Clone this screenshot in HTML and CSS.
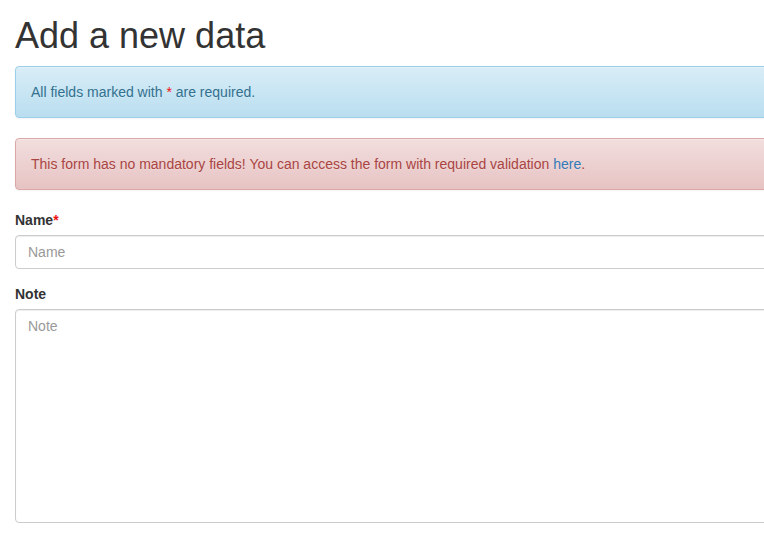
FILE: index.html
```
<!DOCTYPE html>
<html lang="en">
<head>
<meta charset="utf-8">
<title>Add a new data</title>
<link rel="stylesheet" href="styles.css">
</head>
<body>
<div class="container">
  <h1 class="title">Add a new data</h1>
  <div class="alert alert-info">All fields marked with <span class="req">*</span> are required.</div>
  <div class="alert alert-danger">This form has no mandatory fields! You can access the form with required validation <a href="#" class="link">here</a>.</div>
  <form class="form">
    <div class="form-group">
      <label class="label" for="name">Name<span class="req">*</span></label>
      <input class="form-control" id="name" type="text" placeholder="Name">
    </div>
    <div class="form-group">
      <label class="label" for="note">Note</label>
      <textarea class="form-control textarea" id="note" rows="10" placeholder="Note"></textarea>
    </div>
  </form>
</div>
</body>
</html>
```
FILE: styles.css
```
html {
  overflow-x: hidden;
}
body {
  margin: 0;
  font-family: "Liberation Sans", Arial, Helvetica, sans-serif;
  font-size: 14px;
  line-height: 1.42857143;
  color: #333;
  background: #fff;
}
.container {
  width: 970px;
  padding: 0 15px;
  box-sizing: border-box;
}
.title {
  font-family: "Liberation Sans", Arial, sans-serif;
  font-size: 36px;
  font-weight: 500;
  line-height: 1.1;
  margin: 16px 0 10px;
  color: #333;
}
.alert {
  padding: 15px;
  margin-bottom: 20px;
  border: 1px solid transparent;
  border-radius: 4px;
  text-shadow: 0 1px 0 rgba(255,255,255,.2);
  box-shadow: inset 0 1px 0 rgba(255,255,255,.25), 0 1px 2px rgba(0,0,0,.05);
}
.alert-info {
  color: #31708f;
  background-image: linear-gradient(to bottom, #d9edf7 0, #b9def0 100%);
  border-color: #9acfea;
}
.alert-danger {
  color: #a94442;
  background-image: linear-gradient(to bottom, #f2dede 0, #e7c3c3 100%);
  border-color: #dca7a7;
}
.req {
  color: #ee1111;
}
.link {
  color: #337ab7;
  text-decoration: none;
}
.form {
  margin: 0;
}
.form-group {
  margin-bottom: 15px;
}
.label {
  display: inline-block;
  max-width: 100%;
  margin-bottom: 5px;
  font-weight: 700;
}
.form-control {
  display: block;
  width: 100%;
  height: 34px;
  padding: 6px 12px;
  font-family: "Liberation Sans", Arial, sans-serif;
  font-size: 14px;
  line-height: 1.42857143;
  color: #555;
  background-color: #fff;
  border: 1px solid #ccc;
  border-radius: 4px;
  box-shadow: inset 0 1px 1px rgba(0,0,0,.075);
  box-sizing: border-box;
  margin: 0;
}
.form-control::placeholder {
  color: #999;
  opacity: 1;
}
.textarea {
  height: auto;
  resize: vertical;
}
```
